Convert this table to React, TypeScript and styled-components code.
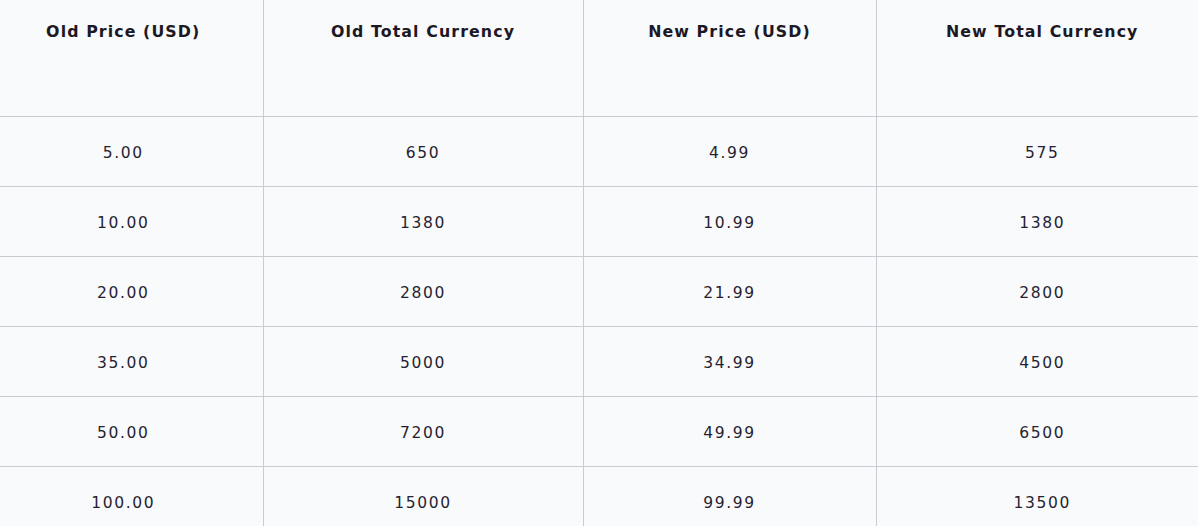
import styled, { createGlobalStyle } from "styled-components";

const GlobalStyle = createGlobalStyle`
  html, body {
    margin: 0;
    padding: 0;
    background: #f9fafc;
  }
  body {
    font-family: "DejaVu Sans", "Liberation Sans", sans-serif;
    overflow: hidden;
  }
`;

const Table = styled.table`
  width: 1224px;
  margin-left: -16px;
  border-collapse: collapse;
  table-layout: fixed;
  background: #f9fafc;
  color: #261f31;
`;

const HeadCell = styled.th<{ $w: number }>`
  width: ${(p) => p.$w}px;
  height: 116px;
  box-sizing: border-box;
  padding: 22px 0 0;
  vertical-align: top;
  text-align: center;
  font-size: 15.8px;
  font-weight: 700;
  letter-spacing: 1.1px;
  color: #1c1824;
  border-right: 1px solid #c9ccd2;
  border-bottom: 1px solid #c9ccd2;
  &:last-child {
    border-right: none;
  }
`;

const Cell = styled.td`
  height: 70px;
  box-sizing: border-box;
  padding: 3px 0 0;
  text-align: center;
  font-size: 15.5px;
  letter-spacing: 1.6px;
  border-right: 1px solid #c9ccd2;
  border-bottom: 1px solid #c9ccd2;
  &:last-child {
    border-right: none;
  }
`;

const columns = [
  { title: "Old Price (USD)", w: 279 },
  { title: "Old Total Currency", w: 320 },
  { title: "New Price (USD)", w: 293 },
  { title: "New Total Currency", w: 332 },
];

const rows = [
  ["5.00", "650", "4.99", "575"],
  ["10.00", "1380", "10.99", "1380"],
  ["20.00", "2800", "21.99", "2800"],
  ["35.00", "5000", "34.99", "4500"],
  ["50.00", "7200", "49.99", "6500"],
  ["100.00", "15000", "99.99", "13500"],
];

export default function App() {
  return (
    <>
      <GlobalStyle />
      <Table>
        <thead>
          <tr>
            {columns.map((c) => (
              <HeadCell key={c.title} $w={c.w}>
                {c.title}
              </HeadCell>
            ))}
          </tr>
        </thead>
        <tbody>
          {rows.map((r, i) => (
            <tr key={i}>
              {r.map((v, j) => (
                <Cell key={j}>{v}</Cell>
              ))}
            </tr>
          ))}
        </tbody>
      </Table>
    </>
  );
}
